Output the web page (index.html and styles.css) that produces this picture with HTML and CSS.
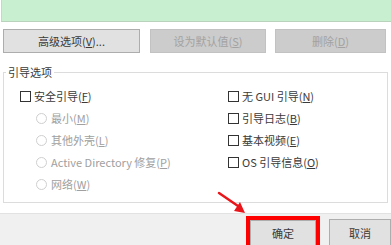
FILE: index.html
```html
<!DOCTYPE html>
<html>
<head>
<meta charset="utf-8">
<link rel="stylesheet" href="styles.css">
</head>
<body>
<div class="page">
  <div class="oslist"></div>
  <div class="btnrow">
    <button class="btn btn-adv">高级选项(<u>V</u>)...</button>
    <button class="btn btn-dis btn-def">设为默认值(<u>S</u>)</button>
    <button class="btn btn-dis btn-del">删除(<u>D</u>)</button>
  </div>
  <fieldset class="group">
    <legend class="legend">引导选项</legend>
    <div class="cols">
      <div class="col col-left">
        <div class="row"><span class="chk"></span><span class="lbl">安全引导(<u>F</u>)</span></div>
        <div class="row sub"><span class="radio"></span><span class="lbl dis">最小(<u>M</u>)</span></div>
        <div class="row sub"><span class="radio"></span><span class="lbl dis">其他外壳(<u>L</u>)</span></div>
        <div class="row sub"><span class="radio"></span><span class="lbl dis">Active Directory 修复(<u>P</u>)</span></div>
        <div class="row sub"><span class="radio"></span><span class="lbl dis">网络(<u>W</u>)</span></div>
      </div>
      <div class="col col-right">
        <div class="row"><span class="chk"></span><span class="lbl">无 GUI 引导(<u>N</u>)</span></div>
        <div class="row"><span class="chk"></span><span class="lbl">引导日志(<u>B</u>)</span></div>
        <div class="row"><span class="chk"></span><span class="lbl">基本视频(<u>E</u>)</span></div>
        <div class="row"><span class="chk"></span><span class="lbl">OS 引导信息(<u>O</u>)</span></div>
      </div>
    </div>
  </fieldset>
  <div class="footer">
    <button class="btn btn-ok">确定</button>
    <button class="btn btn-cancel">取消</button>
  </div>
  <svg class="arrow" width="40" height="30" viewBox="0 0 40 30">
    <line x1="2" y1="2" x2="21" y2="15" stroke="#e8161b" stroke-width="2.5" stroke-linecap="round"/>
    <polygon points="17,20 28,22 23,11" fill="#e8161b"/>
  </svg>
</div>
</body>
</html>
```
FILE: styles.css
```css
* { box-sizing: border-box; }
html, body {
  margin: 0;
  padding: 0;
  background: #ffffff;
}
body {
  font-family: "Noto Sans CJK SC", "Noto Sans", sans-serif;
  font-size: 11px;
  color: #3a3a3a;
  width: 391px;
  height: 245px;
  overflow: hidden;
}
.page {
  position: relative;
  width: 391px;
  height: 245px;
  overflow: hidden;
  display: flex;
  flex-direction: column;
}
.page > * { flex: none; }
.oslist {
  height: 22px;
  margin-left: 1px;
  background: #c8efcf;
  border-left: 1px solid #c4d8c6;
  border-bottom: 1px solid #b9d2bc;
}
.btnrow {
  display: flex;
  margin-top: 7px;
  padding-left: 3px;
  height: 24px;
}
.btn {
  font-family: "Noto Sans CJK SC", "Noto Sans", sans-serif;
  font-size: 11px;
  line-height: 14px;
  padding: 0;
  margin: 0;
  border: 1px solid #adadad;
  background: #e1e1e1;
  color: #3a3a3a;
  display: flex;
  align-items: center;
  justify-content: center;
}
.btn u { text-decoration: underline; }
.btn-adv { width: 137px; height: 24px; }
.btn-dis {
  background: #cccccc;
  border-color: #c2c2c2;
  color: #a2a2a2;
}
.btn-def { width: 116px; height: 24px; margin-left: 10px; }
.btn-del { width: 111px; height: 24px; margin-left: 9px; }
.group {
  margin: 13px 3px 0 3px;
  padding: 7px 0 0 0;
  border: 1px solid #dcdcdc;
  height: 137px;
  min-width: 0;
}
.legend {
  margin-left: 2px;
  padding: 0 2px;
  line-height: 12px;
  color: #3a3a3a;
}
.cols {
  display: flex;
}
.col { display: flex; flex-direction: column; }
.col-left { padding-left: 16px; width: 224px; }
.row {
  display: flex;
  align-items: center;
  height: 22px;
}
.row.sub { padding-left: 16px; }
.chk {
  width: 11px;
  height: 11px;
  border: 1px solid #333333;
  background: #ffffff;
  margin-right: 3px;
  flex: none;
}
.radio {
  width: 11px;
  height: 11px;
  border: 1px solid #cfcfcf;
  border-radius: 50%;
  background: #ffffff;
  margin-right: 4px;
  flex: none;
}
.lbl { white-space: nowrap; line-height: 14px; }
.lbl.dis { color: #a0a0a0; }
.footer {
  margin-top: 10px;
  height: 40px;
  background: #f0f0f0;
  border-top: 1px solid #e2e2e2;
  display: flex;
  align-items: flex-start;
  padding-left: 250px;
  padding-top: 6px;
}
.btn-ok {
  width: 75px;
  height: 30px;
  outline: 4px solid #ff0000;
  outline-offset: 0px;
  border-radius: 0;
  padding-bottom: 4px;
}
.btn-cancel {
  width: 70px;
  height: 30px;
  margin-left: 13px;
  margin-top: -1px;
  padding-bottom: 2px;
}
.arrow {
  position: absolute;
  left: 217px;
  top: 191px;
}
```
